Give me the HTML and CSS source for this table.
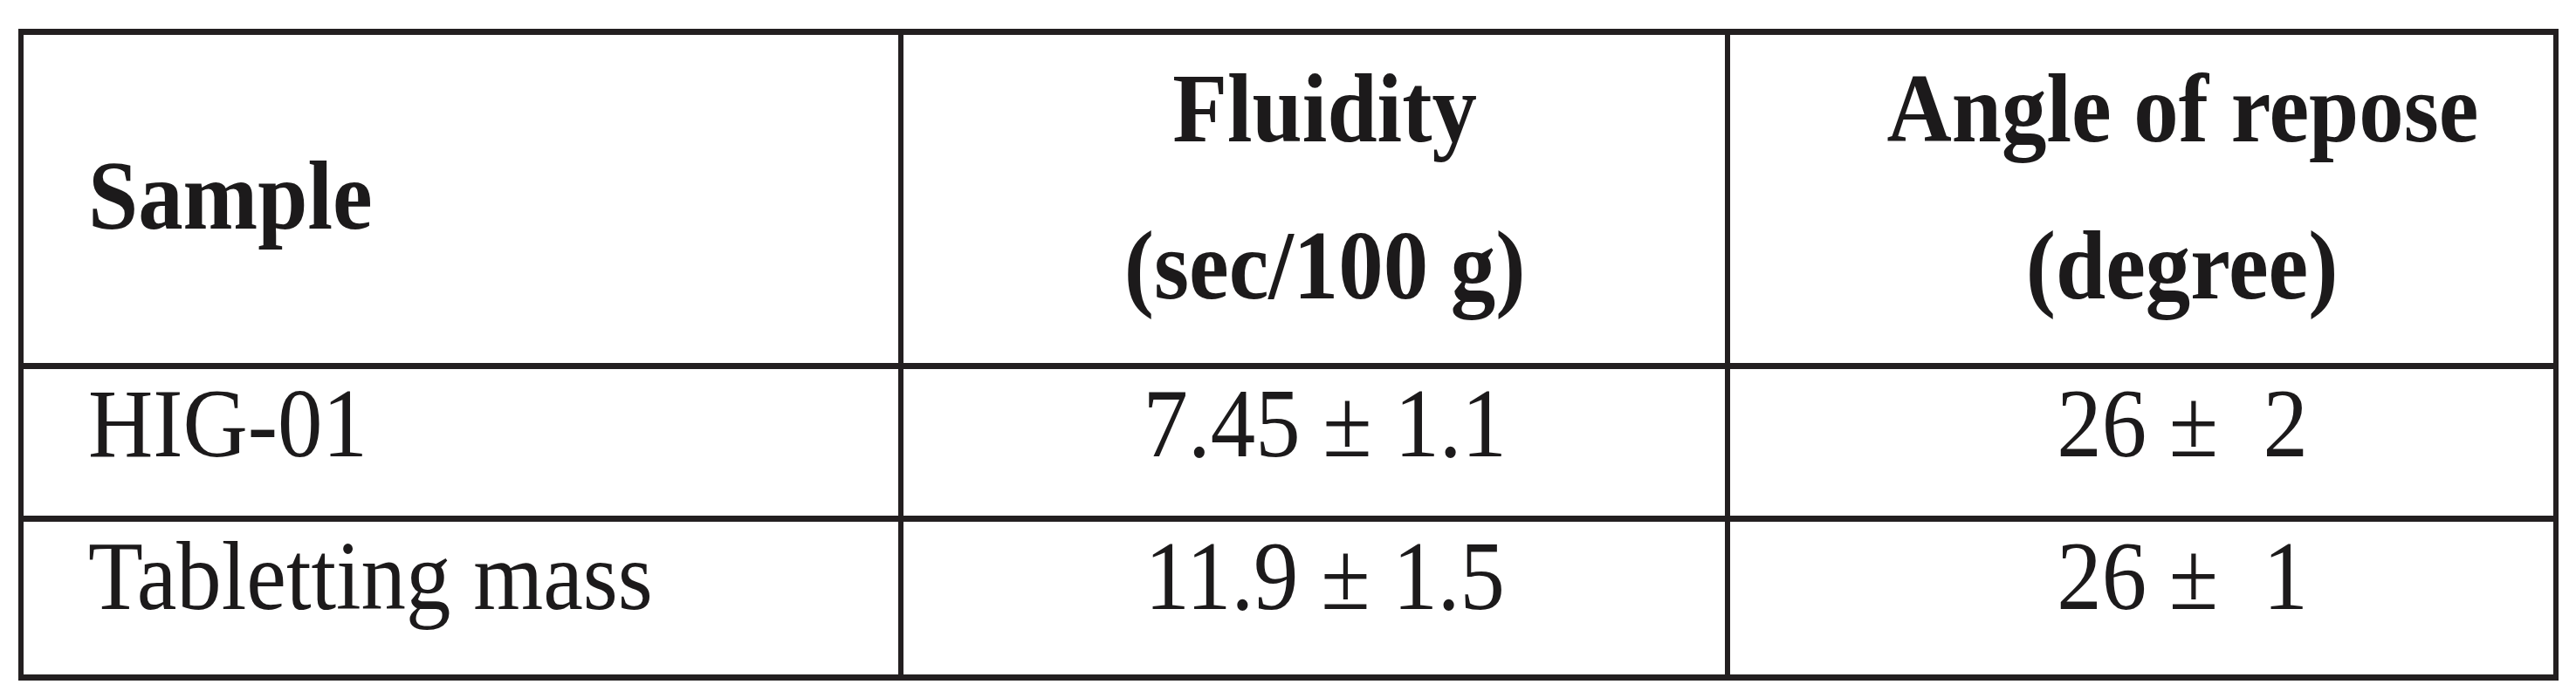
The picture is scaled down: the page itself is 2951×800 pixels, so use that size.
FILE: index.html
```html
<!DOCTYPE html>
<html lang="en">
<head>
<meta charset="utf-8">
<title>Fluidity and angle of repose</title>
<link rel="stylesheet" href="styles.css">
</head>
<body>
<table class="data">
  <thead>
    <tr class="head">
      <th class="c1 name"><span class="t">Sample</span></th>
      <th class="c2 num">
        <div class="stack"><span class="t">Fluidity</span><span class="t">(sec/100 g)</span></div>
      </th>
      <th class="c3 num">
        <div class="stack"><span class="t">Angle of repose</span><span class="t">(degree)</span></div>
      </th>
    </tr>
  </thead>
  <tbody>
    <tr class="row r1">
      <td class="c1 name"><span class="t">HIG-01</span></td>
      <td class="c2 num"><span class="t">7.45 ± 1.1</span></td>
      <td class="c3 num"><span class="t">26 ± &nbsp;2</span></td>
    </tr>
    <tr class="row r2">
      <td class="c1 name"><span class="t">Tabletting mass</span></td>
      <td class="c2 num"><span class="t">11.9 ± 1.5</span></td>
      <td class="c3 num"><span class="t">26 ± &nbsp;1</span></td>
    </tr>
  </tbody>
</table>
</body>
</html>
```
FILE: styles.css
```css
html, body {
  margin: 0;
  padding: 0;
  background: #ffffff;
}

body {
  font-family: "Liberation Serif", "Times New Roman", serif;
  color: #1c1a1b;
}

.data {
  margin: 33px 0 0 21px;
  width: 2910px;
  table-layout: fixed;
  border-collapse: separate;
  border-spacing: 0;
  border-style: solid;
  border-color: #231f20;
  border-width: 7px 6px;
}

.data th,
.data td {
  box-sizing: border-box;
  padding: 0;
  vertical-align: top;
  font-size: 113px;
  line-height: 113px;
  white-space: nowrap;
  border-right: 6px solid #231f20;
  border-bottom: 7px solid #231f20;
}

.data th {
  font-weight: bold;
}

.data td {
  font-weight: normal;
}

.data tr > :last-child {
  border-right: none;
}

.data tbody tr:last-child > * {
  border-bottom: none;
}

.c1 { width: 1008px; }
.c2 { width: 947px; }
.c3 { width: 943px; }

.head > * { height: 383px; }
.r1 > * { height: 175px; }
.r2 > * { height: 175px; }

.name {
  text-align: left;
  padding-left: 74px !important;
}

.num {
  text-align: center;
}

.c2.num { padding-left: 25px !important; }
.c3.num { padding-left: 93px !important; }

.head .name { padding-top: 127px !important; }
.head .num { padding-top: 27px !important; }

.row > * { padding-top: 5px !important; }

.stack {
  display: flex;
  flex-direction: column;
  align-items: center;
  gap: 67px;
}

.t {
  display: inline-block;
  transform: scaleX(0.91);
}

.name .t { transform-origin: left center; }
.num .t { transform-origin: center center; }
```
